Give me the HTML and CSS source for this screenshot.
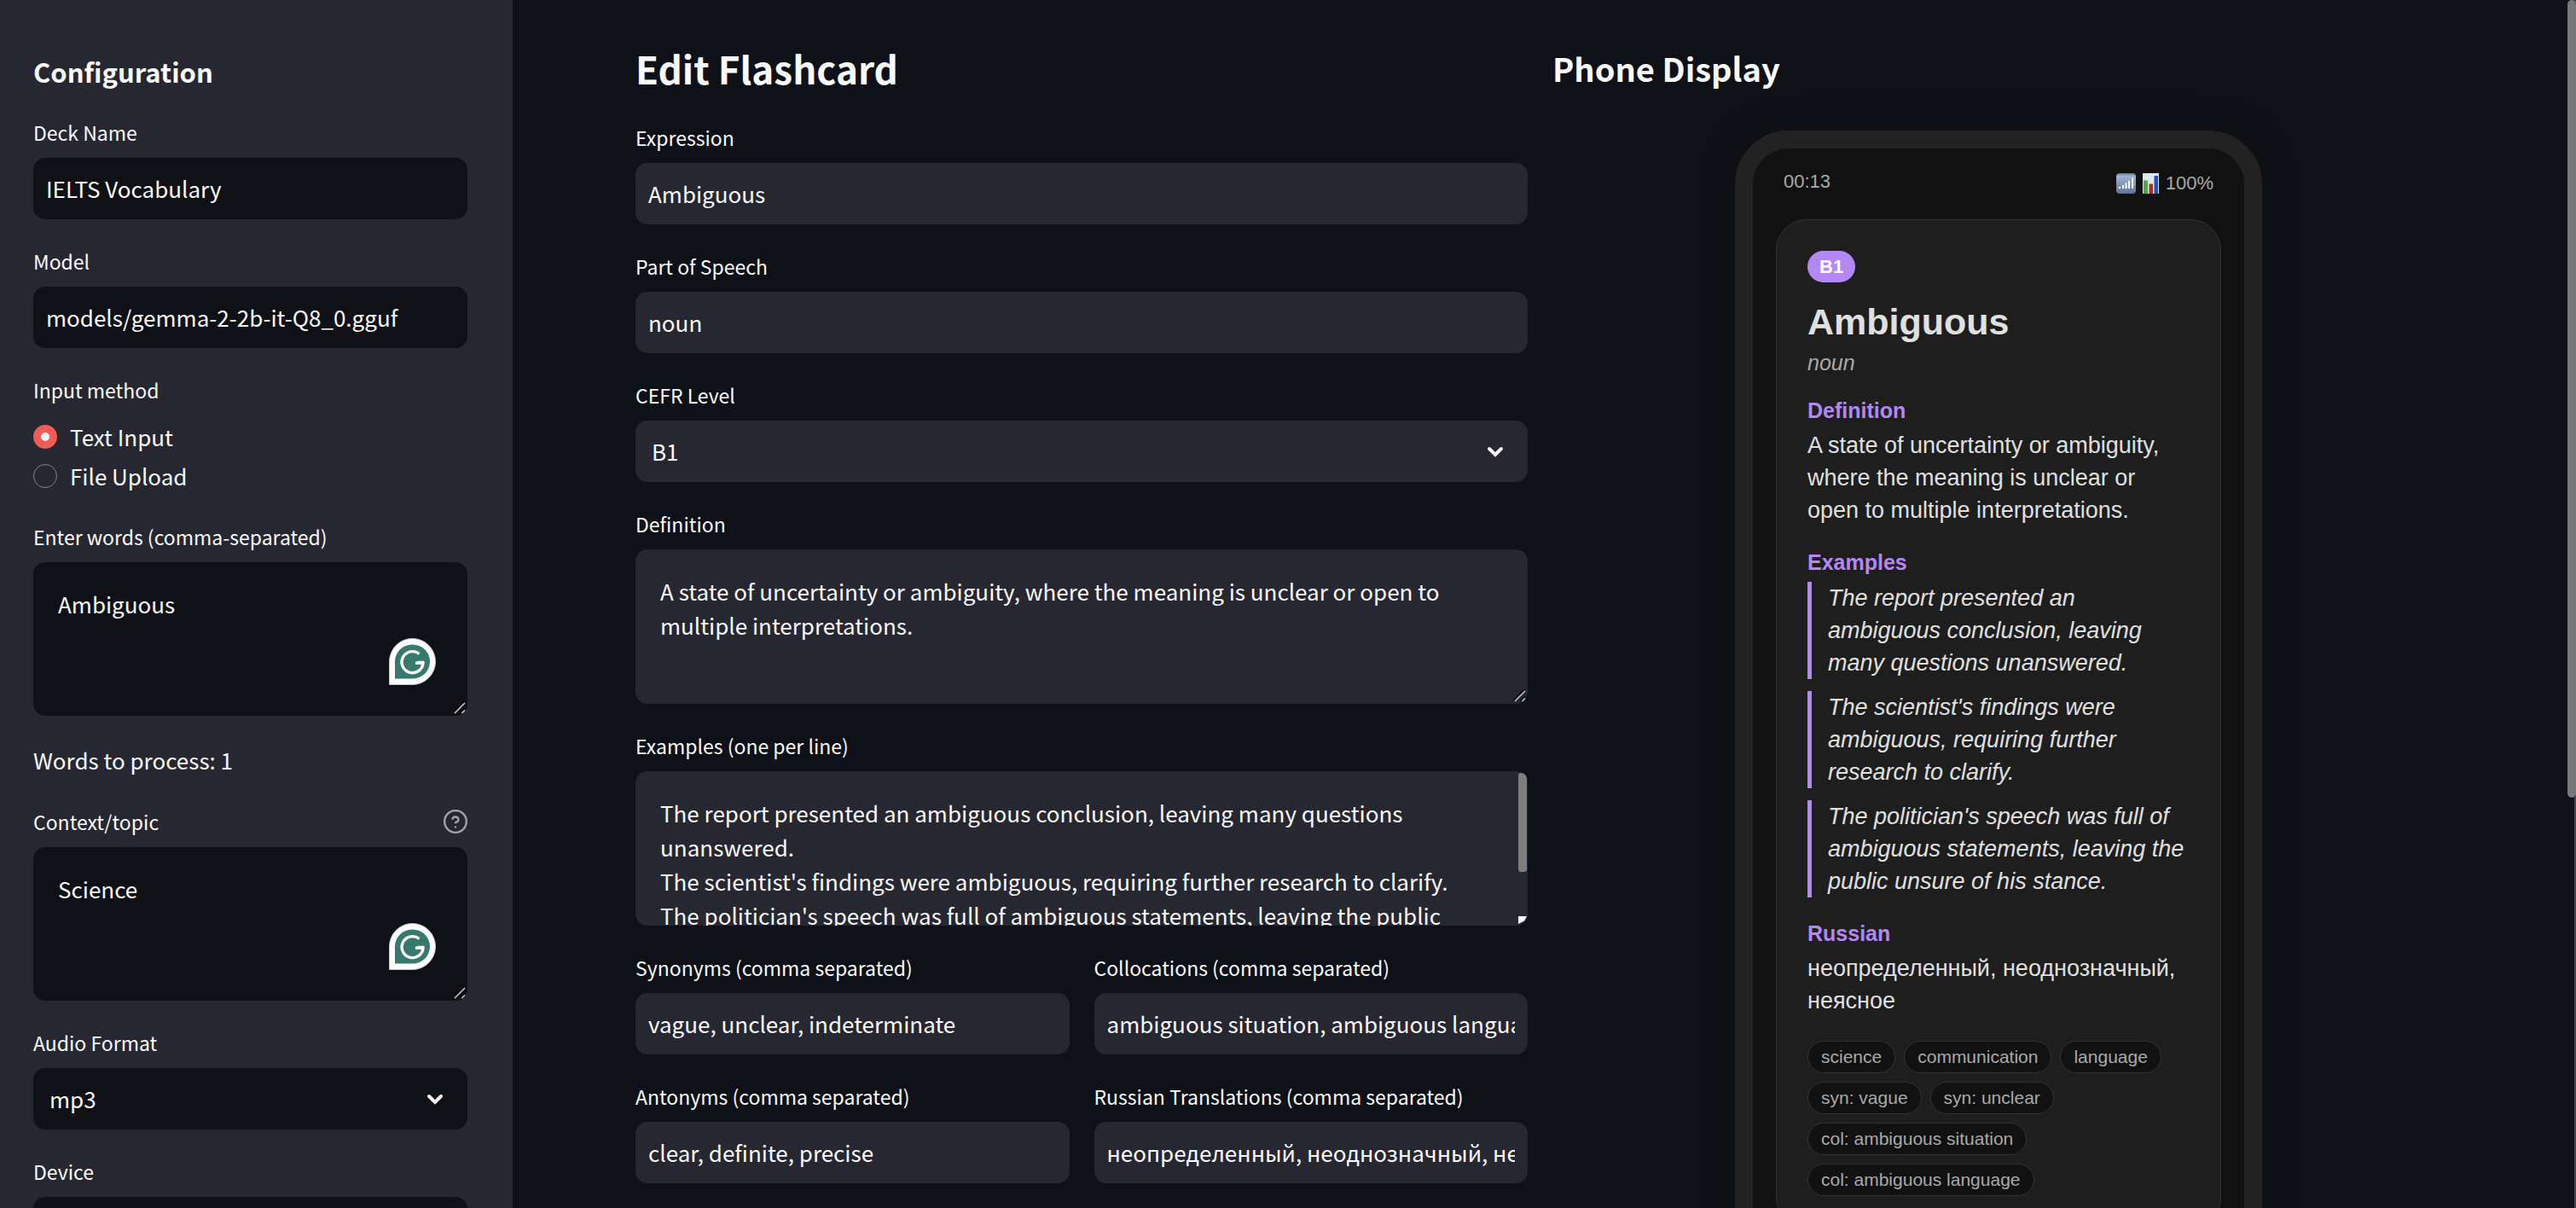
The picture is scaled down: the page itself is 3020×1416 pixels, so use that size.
FILE: index.html
```html
<!DOCTYPE html>
<html lang="en">
<head>
<meta charset="utf-8">
<title>Edit Flashcard</title>
<link rel="stylesheet" href="styles.css">
</head>
<body>
<svg class="sprite" aria-hidden="true">
  <symbol id="chevron" viewBox="0 0 24 24"><path d="M5 9l7 7 7-7" fill="none" stroke="currentColor" stroke-width="4" stroke-linecap="round"/></symbol>
  <symbol id="grip" viewBox="0 0 16 16"><path d="M1 15L15 1M10 15l5-5" fill="none" stroke="#000" stroke-width="4"/><path d="M2 15L15 2M11 15l4-4" fill="none" stroke="#b5b5b5" stroke-width="2"/></symbol>
  <symbol id="assistant" viewBox="0 0 55 55"><path d="M.5 54.500V27.500a27 27 0 1 1 27 27z" fill="#fff" stroke="#c3c4d3"/><path d="M7 47.500V27.500a20.500 20 0 1 1 20.500 20z" fill="#36796d"/><path d="M35.500 18.500A12.500 12.500 0 1 0 40 29.300H31" fill="none" stroke="#fff" stroke-width="3.400"/><path d="M30.500 29.300l3.500-2.600h7v3z" fill="#fff"/></symbol>
</svg>
<div class="app">
  <aside class="sidebar">
    <h3 class="sidebar-title">Configuration</h3>
    <div class="field">
      <label for="deck">Deck Name</label>
      <input class="control" id="deck" type="text" value="IELTS Vocabulary">
    </div>
    <div class="field">
      <label for="model">Model</label>
      <input class="control" id="model" type="text" value="models/gemma-2-2b-it-Q8_0.gguf">
    </div>
    <fieldset class="field">
      <legend>Input method</legend>
      <div class="radios">
        <label class="radio"><input type="radio" name="method" checked>Text Input</label>
        <label class="radio"><input type="radio" name="method">File Upload</label>
      </div>
    </fieldset>
    <div class="field">
      <label for="words">Enter words (comma-separated)</label>
      <div class="box">
        <textarea class="control" id="words">Ambiguous</textarea>
        <svg class="assistant"><use href="#assistant"/></svg>
        <svg class="grip"><use href="#grip"/></svg>
      </div>
    </div>
    <p class="count">Words to process: 1</p>
    <div class="field">
      <div class="label-row">
        <label for="topic">Context/topic</label>
        <svg class="help" viewBox="0 0 24 24" fill="none" stroke="currentColor" stroke-width="2" stroke-linecap="round"><circle cx="12" cy="12" r="11"/><path d="M9 9.300a3.100 3.100 0 0 1 6 .8c0 2-3 2.900-3 2.900M12 17.500h.01"/></svg>
      </div>
      <div class="box">
        <textarea class="control" id="topic">Science</textarea>
        <svg class="assistant"><use href="#assistant"/></svg>
        <svg class="grip"><use href="#grip"/></svg>
      </div>
    </div>
    <div class="field">
      <label for="audio">Audio Format</label>
      <div class="box">
        <select class="control" id="audio"><option>mp3</option><option>wav</option></select>
        <svg class="chevron"><use href="#chevron"/></svg>
      </div>
    </div>
    <div class="field">
      <label for="device">Device</label>
      <div class="box">
        <select class="control" id="device"><option>cpu</option><option>cuda</option></select>
        <svg class="chevron"><use href="#chevron"/></svg>
      </div>
    </div>
  </aside>

  <main class="main">
    <section class="editor">
      <h2 class="editor-title">Edit Flashcard</h2>
      <div class="field">
        <label for="expression">Expression</label>
        <input class="control" id="expression" type="text" value="Ambiguous">
      </div>
      <div class="field">
        <label for="pos">Part of Speech</label>
        <input class="control" id="pos" type="text" value="noun">
      </div>
      <div class="field">
        <label for="level">CEFR Level</label>
        <div class="box">
          <select class="control" id="level"><option>B1</option><option>B2</option><option>C1</option></select>
          <svg class="chevron"><use href="#chevron"/></svg>
        </div>
      </div>
      <div class="field">
        <label for="definition">Definition</label>
        <div class="box">
          <textarea class="control" id="definition">A state of uncertainty or ambiguity, where the meaning is unclear or open to multiple interpretations.</textarea>
          <svg class="grip"><use href="#grip"/></svg>
        </div>
      </div>
      <div class="field">
        <label for="examples">Examples (one per line)</label>
        <div class="box">
          <textarea class="control" id="examples">The report presented an ambiguous conclusion, leaving many questions unanswered.
The scientist's findings were ambiguous, requiring further research to clarify.
The politician's speech was full of ambiguous statements, leaving the public unsure of his stance.</textarea>
          <span class="box-thumb"></span>
          <span class="box-corner"></span>
        </div>
      </div>
      <div class="pair">
        <div class="field">
          <label for="synonyms">Synonyms (comma separated)</label>
          <input class="control" id="synonyms" type="text" value="vague, unclear, indeterminate">
        </div>
        <div class="field">
          <label for="collocations">Collocations (comma separated)</label>
          <input class="control" id="collocations" type="text" value="ambiguous situation, ambiguous language">
        </div>
        <div class="field">
          <label for="antonyms">Antonyms (comma separated)</label>
          <input class="control" id="antonyms" type="text" value="clear, definite, precise">
        </div>
        <div class="field">
          <label for="russian">Russian Translations (comma separated)</label>
          <input class="control" id="russian" type="text" lang="ru" value="неопределенный, неоднозначный, неясное">
        </div>
      </div>
    </section>

    <section class="preview">
      <h3 class="preview-title">Phone Display</h3>
      <div class="phone">
        <div class="status">
          <span>00:13</span>
          <span class="status-right">
            <svg class="signal" viewBox="0 0 23 24"><defs><linearGradient id="sky" x1="0" y1="0" x2="0" y2="1"><stop offset="0" stop-color="#5f7898"/><stop offset=".15" stop-color="#9db4d2"/><stop offset="1" stop-color="#5c7696"/></linearGradient></defs><rect width="23" height="24" rx="4" fill="url(#sky)"/><path d="M3 16h2v2H3zM7 14h2v4H7zM10.500 11.500h2V18h-2zM14 9h2v9h-2zM18 5.500h2V18h-2z" fill="#fff"/></svg>
            <svg class="chart" viewBox="0 0 19 24"><path d="M0 0h19v24H0z" fill="#dfe6ee"/><path d="M1 8.500h5V24H1z" fill="#4caf35"/><path d="M7.500 12.500h4.500V24H7.500z" fill="#b02a25"/><path d="M13.500 3H18v21h-4.500z" fill="#2650ad"/></svg>
            <span>100%</span>
          </span>
        </div>
        <article class="card">
          <span class="badge">B1</span>
          <h1 class="word">Ambiguous</h1>
          <p class="pos">noun</p>
          <h4 class="heading">Definition</h4>
          <p class="body">A state of uncertainty or ambiguity, where the meaning is unclear or open to multiple interpretations.</p>
          <h4 class="heading">Examples</h4>
          <div class="quotes">
            <blockquote>The report presented an ambiguous conclusion, leaving many questions unanswered.</blockquote>
            <blockquote>The scientist's findings were ambiguous, requiring further research to clarify.</blockquote>
            <blockquote>The politician's speech was full of ambiguous statements, leaving the public unsure of his stance.</blockquote>
          </div>
          <h4 class="heading">Russian</h4>
          <p class="body" lang="ru">неопределенный, неоднозначный, неясное</p>
          <ul class="tags">
            <li>science</li><li>communication</li><li>language</li><li>syn: vague</li><li>syn: unclear</li><li>col: ambiguous situation</li><li>col: ambiguous language</li>
          </ul>
        </article>
      </div>
    </section>
  </main>
  <div class="page-track"></div>
  <div class="page-thumb"></div>
</div>
</body>
</html>
```
FILE: styles.css
```css
* { box-sizing: border-box; }

body {
  margin: 0;
  background: #0e1117;
  color: #fafafa;
  font-family: "Noto Sans CJK SC", "Noto Sans", sans-serif;
  font-size: 26px;
  line-height: 40px;
}

h1, h2, h3, h4, p, ul, blockquote, fieldset { margin: 0; padding: 0; border: 0; }

.sprite { position: absolute; width: 0; height: 0; }

.app {
  display: flex;
  height: 100vh;
  overflow: hidden;
}

/* Columns */
.sidebar {
  flex: 0 0 601px;
  display: flex;
  flex-direction: column;
  gap: 29px;
  padding: 62px 53px 62px 39px;
  background: #262730;
  overflow: hidden;
}

.main {
  flex: 1;
  display: grid;
  grid-template-columns: 1fr 1fr;
  align-items: start;
  gap: 29px;
  padding: 48px 154px 48px 144px;
}

.editor {
  display: flex;
  flex-direction: column;
  gap: 29px;
  min-width: 0;
}

.sidebar-title { font-size: 31px; line-height: 44px; }
.editor-title { font-size: 44px; line-height: 64px; }
.preview-title { font-size: 38px; line-height: 64px; }

/* Form fields */
.field { display: flex; flex-direction: column; min-width: 0; flex-shrink: 0; }

.field > label, .label-row, legend {
  margin-bottom: 10px;
  padding: 0;
  font-size: 23px;
  line-height: 40px;
}

.label-row { display: flex; justify-content: space-between; align-items: center; }
.help { width: 28px; height: 28px; color: #a3a4a9; }

.control {
  display: block;
  width: 100%;
  height: 72px;
  margin: 0;
  padding: 0 15px 2px;
  border: 0;
  border-radius: 14px;
  outline: 0;
  background: #262730;
  color: inherit;
  font: inherit;
  appearance: none;
}

.sidebar .control { background: #101116; }
select.control { padding: 0 19px 1px; }
textarea.control { height: 181px; padding: 29px; resize: none; overflow: hidden; }
.sidebar textarea.control { height: 180px; }

.box { position: relative; }
.chevron { position: absolute; right: 26px; top: 24px; width: 24px; height: 24px; pointer-events: none; }
.grip { position: absolute; right: 2px; bottom: 2px; width: 15px; height: 15px; }
.assistant { position: absolute; right: 37px; bottom: 36px; width: 55px; height: 55px; }
.box-thumb { position: absolute; right: 1px; top: 2px; width: 10px; height: 116px; border-radius: 5px 10px 5px 5px; background: #7e7e80; }
.box-corner { position: absolute; right: 1px; bottom: 2px; width: 10px; height: 9px; background: #fff; clip-path: polygon(0 0, 100% 0, 70% 60%, 0 100%); }

.radios { display: flex; flex-direction: column; gap: 2px; padding-top: 3px; }
.radio { display: flex; align-items: center; gap: 15px; line-height: 44px; }
.radio input {
  appearance: none;
  width: 28px;
  height: 28px;
  margin: 0;
  border: 1px solid #83848a;
  border-radius: 50%;
}
.radio input:checked { border: 9px solid #ee5c54; background: #f0f2f6; }

.count { line-height: 46px; }

.pair { display: grid; grid-template-columns: 1fr 1fr; gap: 29px; }

/* Phone */
.phone {
  width: 618px;
  margin: 41px auto 0;
  padding: 28px 27px;
  border: 21px solid #222;
  border-radius: 63px;
  background: #111;
  box-shadow: 0 0 36px rgba(17, 17, 17, .9);
  color: #e0e0e0;
  font-family: "Liberation Sans", Arial, sans-serif;
  font-size: 27px;
  line-height: 38px;
}

.status {
  display: flex;
  justify-content: space-between;
  height: 55px;
  padding: 0 9px;
  color: #aaa;
  font-size: 22px;
  line-height: 22px;
}
.status-right { display: flex; align-items: center; gap: 8px; height: 26px; }
.signal { width: 23px; height: 24px; }
.chart { width: 19px; height: 24px; }

.card {
  padding: 36px;
  border: 1px solid #333;
  border-radius: 36px;
  background: #1e1e1e;
}

.badge {
  display: block;
  width: fit-content;
  padding: 0 14px;
  border-radius: 19px;
  background: #b388f5;
  color: #fff;
  font-size: 22px;
  font-weight: bold;
  line-height: 37px;
}

.word { margin-top: 16px; font-size: 43px; line-height: 60px; }
.pos { color: #aaa; font-size: 25px; font-style: italic; line-height: 36px; }
.heading { margin-top: 24px; color: #b388f5; font-size: 25px; line-height: 36px; }
.pos + .heading { margin-top: 20px; }
.body { margin-top: 4px; }

.quotes { display: flex; flex-direction: column; gap: 14px; margin-top: 5px; }
.quotes blockquote { padding-left: 19px; border-left: 5px solid #b388f5; font-style: italic; }

.tags { display: flex; flex-wrap: wrap; gap: 10px; margin-top: 28px; padding-bottom: 1px; list-style: none; }
.tags li {
  padding: 0 15px;
  border: 1px solid #333;
  border-radius: 19px;
  background: #111;
  color: #aaa;
  font-size: 21px;
  line-height: 36px;
}

/* Page scrollbar */
.page-track { position: fixed; top: 0; right: 0; width: 2px; height: 100%; background: #45474b; }
.page-thumb { position: fixed; top: 0; right: 0; width: 10px; height: 935px; border-radius: 5px; background: #77787b; }
```
